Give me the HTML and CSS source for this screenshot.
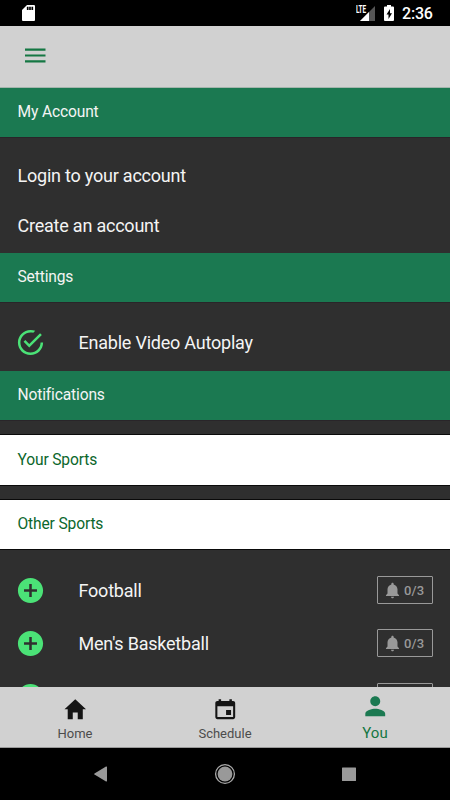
FILE: index.html
```html
<!DOCTYPE html>
<html lang="en">
<head>
<meta charset="utf-8">
<title>You</title>
<link rel="stylesheet" href="styles.css">
</head>
<body>
<svg class="defs" aria-hidden="true">
  <symbol id="add" viewBox="0 0 512 512"><path d="M256 48C141.125 48 48 141.125 48 256s93.125 208 208 208 208-93.125 208-208S370.875 48 256 48zm107 229h-86v86h-42v-86h-86v-42h86v-86h42v86h86v42z"/></symbol>
  <symbol id="bell" viewBox="0 0 512 512"><path d="M256 464c22.779 0 41.411-18.719 41.411-41.6h-82.823c0 22.881 18.633 41.6 41.412 41.6zm134.589-124.8V224.8c0-63.44-44.516-117.518-103.53-131.041V79.2c0-17.682-13.457-31.2-31.059-31.2s-31.059 13.518-31.059 31.2v14.559c-59.015 13.523-103.53 67.601-103.53 131.041v114.4L80 380.8v20.8h352v-20.8l-41.411-41.6z"/></symbol>
</svg>
<div class="screen">
  <div class="status">
    <svg class="sd" viewBox="0 0 13 16"><path d="M5 0h7a1 1 0 0 1 1 1v14a1 1 0 0 1-1 1H1a1 1 0 0 1-1-1V5z" fill="#fff"/><path d="M5.700 1.800v3.200M8 1.800v3.200M10.300 1.800v3.200" stroke="#000" stroke-width="1.700"/></svg>
    <div class="signal"><span class="lte">LTE</span><svg viewBox="0 0 15 15"><path d="M15 0v15H0z" fill="#555"/><path d="M9 6v9H0z" fill="#fff"/></svg></div>
    <svg class="battery" viewBox="0 0 10 16"><path d="M3 0h4v1.500h2a1 1 0 0 1 1 1V15a1 1 0 0 1-1 1H1a1 1 0 0 1-1-1V2.500a1 1 0 0 1 1-1h2z" fill="#fff"/><path d="M6 4L2.500 9.500h2V14L8 8.300H6z" fill="#000"/></svg>
    <span class="clock">2:36</span>
  </div>
  <header class="toolbar">
    <svg class="menu" viewBox="0 0 21 15"><path d="M0 1.500h21M0 7.500h21M0 13.500h21"/></svg>
  </header>
  <main class="content">
    <h2 class="divider">My Account</h2>
    <div class="links"><a class="link">Login to your account</a><a class="link">Create an account</a></div>
    <h2 class="divider">Settings</h2>
    <div class="option">
      <svg class="mark" viewBox="0 0 512 512"><path d="M170.718 216.482L141.6 245.6l93.6 93.6 208-208-29.118-29.118L235.2 279.918l-64.482-63.436zM422.4 256c0 91.518-74.883 166.4-166.4 166.4S89.6 347.518 89.6 256 164.482 89.6 256 89.6c15.6 0 31.2 2.082 45.764 6.241L334 62.4C310.082 53.041 283.037 48 256 48 141.601 48 48 141.601 48 256s93.601 208 208 208 208-93.601 208-208h-41.6z"/></svg>
      <span>Enable Video Autoplay</span>
    </div>
    <h2 class="divider">Notifications</h2>
    <h3 class="group your">Your Sports</h3>
    <h3 class="group other">Other Sports</h3>
    <div class="sports">
      <div class="sport"><svg class="mark"><use href="#add"/></svg><span class="name">Football</span><span class="alerts"><svg><use href="#bell"/></svg>0/3</span></div>
      <div class="sport"><svg class="mark"><use href="#add"/></svg><span class="name">Men's Basketball</span><span class="alerts"><svg><use href="#bell"/></svg>0/3</span></div>
      <div class="sport"><svg class="mark"><use href="#add"/></svg><span class="name"></span><span class="alerts"></span></div>
    </div>
  </main>
  <nav class="tabs">
    <div class="tab"><svg viewBox="0 0 512 512"><path d="M208 448V320h96v128h97.600V256H464L256 64 48 256h62.400v192z"/></svg><span>Home</span></div>
    <div class="tab"><svg viewBox="0 0 512 512"><path d="M368.005 272h-96v96h96v-96zm-32-208v32h-160V64h-48v32h-24.01c-22.002 0-40 17.998-40 40v272c0 22.002 17.998 40 40 40h304.01c22.002 0 40-17.998 40-40V136c0-22.002-17.998-40-40-40h-24V64h-48zm72 344h-304.01V196h304.01v212z"/></svg><span>Schedule</span></div>
    <div class="tab active"><svg viewBox="0 0 512 512"><path d="M256 256c52.805 0 96-43.201 96-96s-43.195-96-96-96-96 43.201-96 96 43.195 96 96 96zm0 48c-63.598 0-192 32.402-192 96v48h384v-48c0-63.598-128.402-96-192-96z"/></svg><span>You</span></div>
  </nav>
  <div class="system">
    <svg viewBox="0 0 24 24"><path d="M18 5v14a1 1 0 0 1-1 .5L5.500 12.500q-.8-.5 0-1L17 4.500q1-.3 1 .5z" fill="#999"/></svg>
    <svg viewBox="0 0 24 24"><circle cx="12" cy="12" r="9.400" fill="none" stroke="#aaa" stroke-width="1.300"/><circle cx="12" cy="12" r="7.400" fill="#999"/></svg>
    <svg viewBox="0 0 24 24"><rect x="5" y="5.500" width="14" height="13.500" rx=".5" fill="#999"/></svg>
  </div>
</div>
</body>
</html>
```

FILE: styles.css
```css
* { box-sizing: border-box; }
body { margin: 0; background: #000; font-family: Roboto, sans-serif; }
svg { display: block; flex: none; }
.defs { display: none; }
.screen { width: 450px; height: 800px; display: flex; flex-direction: column; overflow: hidden; background: #2f2f2f; }

.status { height: 26px; flex: none; display: flex; align-items: center; padding: 0 17px 0 22px; background: #000; color: #fff; }
.sd { width: 13px; height: 16px; }
.signal { position: relative; margin-left: auto; width: 19px; height: 16px; display: flex; justify-content: flex-end; align-items: flex-end; }
.signal svg { width: 15px; height: 15px; }
.lte { position: absolute; left: 0; top: 0; z-index: 1; font: bold 10px/9px "Roboto", sans-serif; letter-spacing: -.2px; background: #000; width: 15px; height: 8px; transform-origin: 0 0; white-space: nowrap; transform: scaleX(.64); }
.battery { width: 10px; height: 16px; margin-left: 9px; }
.clock { width: 31px; margin-left: 8px; font-size: 16px; font-weight: 500; letter-spacing: -.2px; line-height: 26px; padding-top: 2px; white-space: nowrap; }

.toolbar { height: 62px; flex: none; display: flex; align-items: center; padding: 0 25px; background: #d1d1d1; border-bottom: 1px solid #a4b5ad; }
.menu { width: 20.5px; height: 15px; margin-top: -2px; stroke: #147743; stroke-width: 2.100; }

.content { flex: 1; min-height: 0; overflow: hidden; color: #f4f4f4; font-size: 18px; letter-spacing: -.22px; }
.divider, .group { margin: 0; height: 49px; padding-left: 17.5px; font-size: 15.6px; letter-spacing: -.15px; font-weight: 400; line-height: 48px; }
.divider { background: #1b7951; color: #f4f4f4; box-shadow: 0 1px #292529; }
.links { height: 116px; padding: 14px 17.5px 0; }
.link { display: block; line-height: 50px; }
.option, .sport { display: flex; align-items: center; padding: 0 17px 0 15px; }
.option { height: 69px; padding-top: 11px; }
.mark { width: 31px; height: 31px; margin-right: 32.500px; fill: #4be277; }
.group { background: #fff; color: #0c672c; box-shadow: 0 -1px #0a0a0a, 0 1px #0a0a0a; }
.your { height: 50px; margin-top: 15px; line-height: 50px; }
.other { margin-top: 15px; }
.sports { padding-top: 14.500px; }
.sport { height: 53.300px; }
.name { flex: 1; }
.alerts { width: 56px; height: 28px; display: flex; align-items: center; padding-left: 4.500px; border: 1px solid #999; border-radius: 1px; color: #999; font-size: 13px; font-weight: 500; letter-spacing: .2px; }
.alerts svg { width: 19px; height: 19px; margin-right: 2.500px; fill: #999; }

.tabs { height: 61px; flex: none; display: flex; background: #d1d1d1; border-bottom: 1px solid #999; }
.tab { flex: 1; display: flex; flex-direction: column; align-items: center; padding-top: 8.500px; color: #4c4c4c; font-size: 13px; line-height: 20px; }
.tab svg { width: 26.500px; height: 26.500px; fill: #151515; margin-bottom: 1.500px; }
.tab.active { padding-top: 6px; color: #147743; font-size: 15px; }
.tab.active svg { fill: #1b7951; margin-bottom: 3px; }

.system { height: 52px; flex: none; display: flex; justify-content: center; gap: 100px; align-items: center; background: #000; }
.system svg { width: 24px; height: 24px; margin-top: -1px; }
```
